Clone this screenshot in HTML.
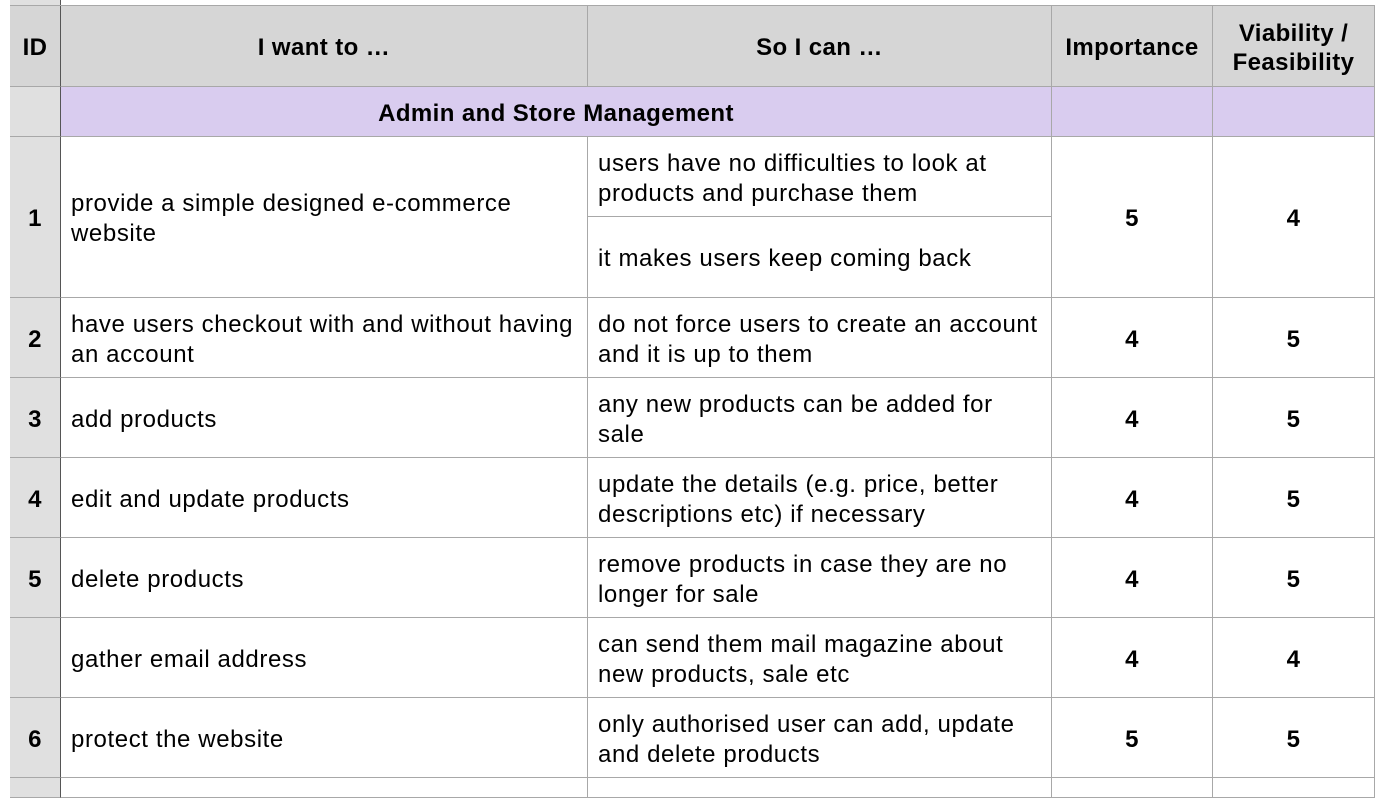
<!DOCTYPE html><html><head><style>
body{margin:0;width:1384px;height:788px;background:#fff;position:relative;overflow:hidden;font-family:"Liberation Sans",Arial,sans-serif;font-size:24px;letter-spacing:0.6px;color:#000}
.c{position:absolute;display:flex;align-items:center;box-sizing:border-box;line-height:30px;border-right:1px solid #a8a8a8;border-bottom:1px solid #a8a8a8;white-space:nowrap;padding-top:4px}
.b{font-weight:bold;justify-content:center;text-align:center;letter-spacing:0.4px}
.l{padding-left:10px}
.id{background:#e0e0e0;border-right:1px solid #555}
.h{background:#d6d6d6}
.p{background:#d9ccef}
</style></head><body>
<div style="position:absolute;left:10px;top:0;width:50px;height:6px;background:#e0e0e0;border-right:1px solid #555"></div>
<div style="position:absolute;left:10px;top:5px;width:1365px;height:1px;background:#a8a8a8"></div>

<div class="c id h b" style="left:10px;top:6px;width:51px;height:81px">ID</div>
<div class="c h b" style="left:61px;top:6px;width:527px;height:81px">I want to …</div>
<div class="c h b" style="left:588px;top:6px;width:464px;height:81px">So I can …</div>
<div class="c h b" style="left:1052px;top:6px;width:161px;height:81px">Importance</div>
<div class="c h b" style="left:1213px;top:6px;width:162px;height:81px;line-height:29px">Viability /<br>Feasibility</div>

<div class="c id" style="left:10px;top:87px;width:51px;height:50px"></div>
<div class="c p b" style="left:61px;top:87px;width:991px;height:50px">Admin and Store Management</div>
<div class="c p" style="left:1052px;top:87px;width:161px;height:50px"></div>
<div class="c p" style="left:1213px;top:87px;width:162px;height:50px"></div>

<div class="c id b" style="left:10px;top:137px;width:51px;height:161px">1</div>
<div class="c l" style="left:61px;top:137px;width:527px;height:161px">provide a simple designed e-commerce<br>website</div>
<div class="c l" style="left:588px;top:137px;width:464px;height:80px;padding-top:5px">users have no difficulties to look at<br>products and purchase them</div>
<div class="c l" style="left:588px;top:217px;width:464px;height:81px">it makes users keep coming back</div>
<div class="c b" style="left:1052px;top:137px;width:161px;height:161px">5</div>
<div class="c b" style="left:1213px;top:137px;width:162px;height:161px">4</div>

<div class="c id b" style="left:10px;top:298px;width:51px;height:80px">2</div>
<div class="c l" style="left:61px;top:298px;width:527px;height:80px">have users checkout with and without having<br>an account</div>
<div class="c l" style="left:588px;top:298px;width:464px;height:80px">do not force users to create an account<br>and it is up to them</div>
<div class="c b" style="left:1052px;top:298px;width:161px;height:80px">4</div>
<div class="c b" style="left:1213px;top:298px;width:162px;height:80px">5</div>

<div class="c id b" style="left:10px;top:378px;width:51px;height:80px">3</div>
<div class="c l" style="left:61px;top:378px;width:527px;height:80px">add products</div>
<div class="c l" style="left:588px;top:378px;width:464px;height:80px">any new products can be added for<br>sale</div>
<div class="c b" style="left:1052px;top:378px;width:161px;height:80px">4</div>
<div class="c b" style="left:1213px;top:378px;width:162px;height:80px">5</div>

<div class="c id b" style="left:10px;top:458px;width:51px;height:80px">4</div>
<div class="c l" style="left:61px;top:458px;width:527px;height:80px">edit and update products</div>
<div class="c l" style="left:588px;top:458px;width:464px;height:80px">update the details (e.g. price, better<br>descriptions etc) if necessary</div>
<div class="c b" style="left:1052px;top:458px;width:161px;height:80px">4</div>
<div class="c b" style="left:1213px;top:458px;width:162px;height:80px">5</div>

<div class="c id b" style="left:10px;top:538px;width:51px;height:80px">5</div>
<div class="c l" style="left:61px;top:538px;width:527px;height:80px">delete products</div>
<div class="c l" style="left:588px;top:538px;width:464px;height:80px">remove products in case they are no<br>longer for sale</div>
<div class="c b" style="left:1052px;top:538px;width:161px;height:80px">4</div>
<div class="c b" style="left:1213px;top:538px;width:162px;height:80px">5</div>

<div class="c id b" style="left:10px;top:618px;width:51px;height:80px"></div>
<div class="c l" style="left:61px;top:618px;width:527px;height:80px">gather email address</div>
<div class="c l" style="left:588px;top:618px;width:464px;height:80px">can send them mail magazine about<br>new products, sale etc</div>
<div class="c b" style="left:1052px;top:618px;width:161px;height:80px">4</div>
<div class="c b" style="left:1213px;top:618px;width:162px;height:80px">4</div>

<div class="c id b" style="left:10px;top:698px;width:51px;height:80px">6</div>
<div class="c l" style="left:61px;top:698px;width:527px;height:80px">protect the website</div>
<div class="c l" style="left:588px;top:698px;width:464px;height:80px">only authorised user can add, update<br>and delete products</div>
<div class="c b" style="left:1052px;top:698px;width:161px;height:80px">5</div>
<div class="c b" style="left:1213px;top:698px;width:162px;height:80px">5</div>

<div class="c id" style="left:10px;top:778px;width:51px;height:20px"></div>
<div class="c" style="left:61px;top:778px;width:527px;height:20px"></div>
<div class="c" style="left:588px;top:778px;width:464px;height:20px"></div>
<div class="c" style="left:1052px;top:778px;width:161px;height:20px"></div>
<div class="c" style="left:1213px;top:778px;width:162px;height:20px"></div>
</body></html>
